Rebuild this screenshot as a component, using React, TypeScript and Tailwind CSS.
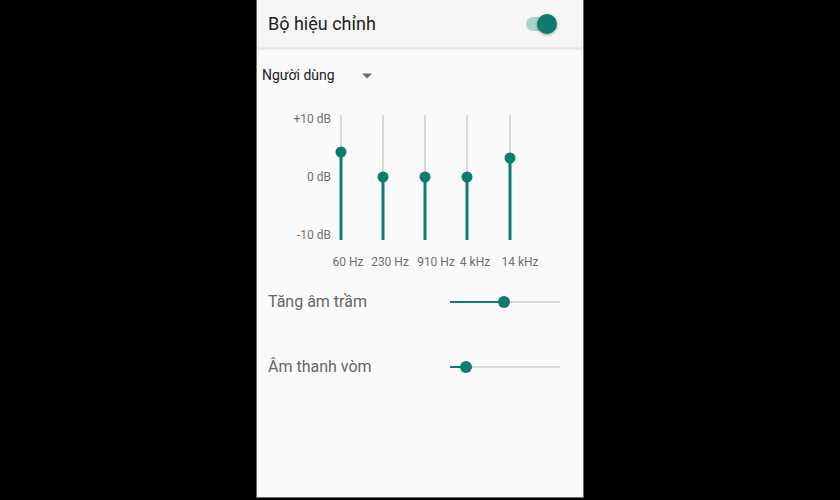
const TEAL = "#0e7c6c";

const bands = [
  { x: 84, thumb: 50, label: "60 Hz", lx: 91 },
  { x: 126, thumb: 75, label: "230 Hz", lx: 133 },
  { x: 168, thumb: 75, label: "910 Hz", lx: 179 },
  { x: 210, thumb: 75, label: "4 kHz", lx: 218 },
  { x: 253, thumb: 56, label: "14 kHz", lx: 263 },
];

const BAR_TOP = 13;
const BAR_BOTTOM = 138;

function Slider({ value }: { value: number }) {
  return (
    <div className="relative w-[110px] h-[12px] flex items-center">
      <div className="w-full h-[2px] bg-[#d9d9d9]" />
      <div
        className="absolute left-0 h-[2px] bg-[#0e7c6c]"
        style={{ width: value }}
      />
      <div
        className="absolute w-[12px] h-[12px] rounded-full bg-[#0e7c6c] -translate-x-1/2"
        style={{ left: value }}
      />
    </div>
  );
}

export default function App() {
  return (
    <div
      className="w-[840px] h-[500px] bg-black flex justify-center"
      style={{ fontFamily: "Roboto, 'Noto Sans', sans-serif" }}
    >
      <div className="w-[328px] h-[498px] bg-[#fafafa] border-x border-b border-[#6b6b6b] flex flex-col">
        {/* header */}
        <div className="h-12 shrink-0 bg-[#f6f6f6] shadow-[0_1px_2px_rgba(0,0,0,0.12)] border-b border-[#ececec] flex items-center justify-between pl-[11px] pr-[27px]">
          <span className="text-[18px] text-[#212121]">Bộ hiệu chỉnh</span>
          <div className="relative w-[30px] h-[14px] flex items-center">
            <div className="w-full h-[14px] rounded-full bg-[#a9d3cd]" />
            <div className="absolute right-[-1px] w-[20px] h-[20px] rounded-full bg-[#0e7c6c] shadow-[0_1px_3px_rgba(0,0,0,0.35)]" />
          </div>
        </div>

        {/* preset dropdown */}
        <div className="h-[54px] shrink-0 flex items-center pl-[5px]">
          <span className="text-[14px] text-[#212121] w-[100px]">Người dùng</span>
          <svg width="10" height="6" viewBox="0 0 10 5" className="mt-[1px]">
            <path d="M0 0h10L5 5z" fill="#6e6e6e" />
          </svg>
        </div>

        {/* equalizer chart */}
        <div className="relative h-[178px] shrink-0">
          {[
            { t: "+10 dB", y: 17 },
            { t: "0 dB", y: 75 },
            { t: "-10 dB", y: 133 },
          ].map((d) => (
            <span
              key={d.t}
              className="absolute right-[252px] -translate-y-1/2 text-[12px] text-[#6f6f6f] leading-none"
              style={{ top: d.y }}
            >
              {d.t}
            </span>
          ))}
          {bands.map((b) => (
            <div key={b.label}>
              <div
                className="absolute w-[2px] bg-[#d9d9d9] -translate-x-1/2"
                style={{ left: b.x, top: BAR_TOP, height: b.thumb - BAR_TOP }}
              />
              <div
                className="absolute w-[3px] bg-[#0e7c6c] -translate-x-1/2"
                style={{ left: b.x, top: b.thumb, height: BAR_BOTTOM - b.thumb }}
              />
              <div
                className="absolute w-[11px] h-[11px] rounded-full -translate-x-1/2 -translate-y-1/2"
                style={{ left: b.x, top: b.thumb, backgroundColor: TEAL }}
              />
              <span
                className="absolute -translate-x-1/2 -translate-y-1/2 text-[12px] text-[#6f6f6f] leading-none whitespace-nowrap"
                style={{ left: b.lx, top: 160 }}
              >
                {b.label}
              </span>
            </div>
          ))}
        </div>

        {/* bass boost */}
        <div className="h-[44px] shrink-0 flex items-center justify-between pl-[11px] pr-[23px]">
          <span className="text-[16px] text-[#666666]">Tăng âm trầm</span>
          <Slider value={54} />
        </div>

        {/* virtualizer */}
        <div className="h-[86px] shrink-0 flex items-center justify-between pl-[11px] pr-[23px]">
          <span className="text-[16px] text-[#666666]">Âm thanh vòm</span>
          <Slider value={16} />
        </div>
      </div>
    </div>
  );
}
